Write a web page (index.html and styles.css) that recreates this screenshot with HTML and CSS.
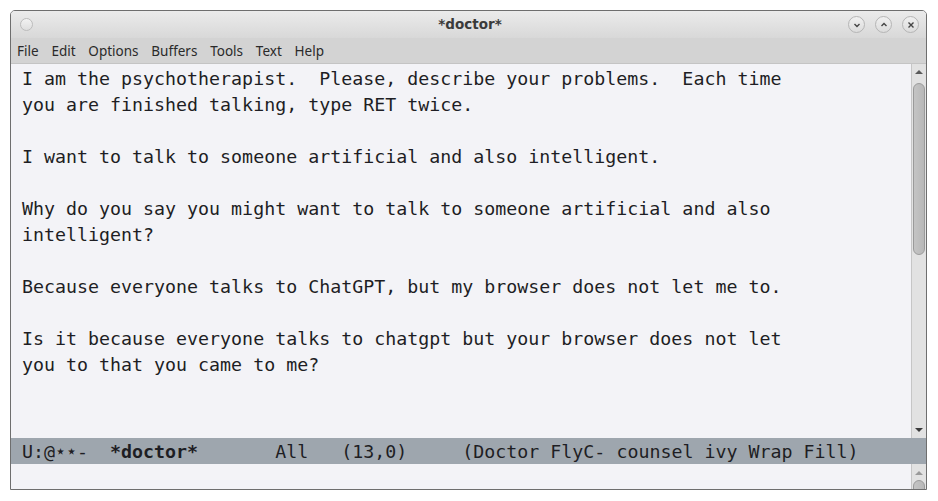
FILE: index.html
```html
<!DOCTYPE html>
<html>
<head>
<meta charset="utf-8">
<link rel="stylesheet" href="styles.css">
</head>
<body>
<div class="window">
  <div class="titlebar">
    <span class="dot"></span>
    <span class="title">*doctor*</span>
    <div class="controls">
      <span class="btn"><svg width="10" height="10" viewBox="0 0 10 10"><path d="M2.5 4 L5 6.5 L7.5 4" fill="none" stroke="#444" stroke-width="1.4"/></svg></span>
      <span class="btn"><svg width="10" height="10" viewBox="0 0 10 10"><path d="M2.5 6 L5 3.5 L7.5 6" fill="none" stroke="#444" stroke-width="1.4"/></svg></span>
      <span class="btn"><svg width="10" height="10" viewBox="0 0 10 10"><path d="M2.5 2.5 L7.5 7.5 M7.5 2.5 L2.5 7.5" fill="none" stroke="#444" stroke-width="1.4"/></svg></span>
    </div>
  </div>
  <div class="menubar">
    <span>File</span><span>Edit</span><span>Options</span><span>Buffers</span><span>Tools</span><span>Text</span><span>Help</span>
  </div>
  <div class="editor">
    <pre class="text">I am the psychotherapist.  Please, describe your problems.  Each time
you are finished talking, type RET twice.

I want to talk to someone artificial and also intelligent.

Why do you say you might want to talk to someone artificial and also
intelligent?

Because everyone talks to ChatGPT, but my browser does not let me to.

Is it because everyone talks to chatgpt but your browser does not let
you to that you came to me?</pre>
    <div class="scrollbar">
      <span class="arrow up"></span>
      <span class="thumb"></span>
      <span class="spacer"></span>
      <span class="arrow down"></span>
    </div>
  </div>
  <div class="modeline"><pre>U:@<span class="star">⋆⋆</span>-  <b>*doctor*</b>       All   (13,0)     (Doctor FlyC- counsel ivy Wrap Fill)</pre></div>
  <div class="minibuffer">
    <div class="mini-text"></div>
    <div class="scrollbar mini">
      <span class="arrow up"></span>
      <span class="thumb small"></span>
    </div>
  </div>
</div>
</body>
</html>
```
FILE: styles.css
```css
html, body {
  margin: 0;
  padding: 0;
  background: #ffffff;
}
.window {
  margin: 10px 0 0 10px;
  width: 915px;
  height: 478px;
  border: 1px solid #6e6e6e;
  border-radius: 5px 5px 0 0;
  display: flex;
  flex-direction: column;
  overflow: hidden;
  background: #f3f3f7;
}
.titlebar {
  height: 27px;
  flex: none;
  display: flex;
  align-items: center;
  position: relative;
  background: linear-gradient(#ebebeb, #d8d8d8);
}
.dot {
  width: 11px;
  height: 11px;
  border-radius: 50%;
  border: 1px solid #bcbcbc;
  background: linear-gradient(#f2f2f2, #dedede);
  margin-left: 9px;
}
.title {
  position: absolute;
  left: 3px;
  right: 0;
  top: 5px;
  text-align: center;
  font: bold 13.5px "DejaVu Sans", sans-serif;
  color: #3a3a3a;
}
.controls {
  margin-left: auto;
  margin-right: 7px;
  display: flex;
  gap: 10px;
}
.btn {
  width: 15px;
  height: 15px;
  border-radius: 50%;
  border: 1px solid #b5b5b5;
  background: linear-gradient(#f0f0f0, #dcdcdc);
  display: flex;
  align-items: center;
  justify-content: center;
}
.menubar {
  height: 26px;
  flex: none;
  background: #d3d3d3;
  display: flex;
  align-items: center;
  padding-left: 6px;
  gap: 12.8px;
  font: 13.5px "Noto Sans", "DejaVu Sans", sans-serif;
  color: #2a2a2a;
  border-bottom: 1px solid #c4c4c4;
  box-sizing: border-box;
}
.editor {
  height: 374px;
  flex: none;
  display: flex;
  background: #f3f3f7;
  overflow: hidden;
}
.text {
  flex: 1;
  margin: 0;
  padding: 2px 0 0 11px;
  font: 18.3px/26px "DejaVu Sans Mono", monospace;
  color: #1e1e24;
  white-space: pre;
}
.scrollbar {
  width: 14px;
  flex: none;
  background: #e2e2e2;
  border-left: 1px solid #c6c6c6;
  display: flex;
  flex-direction: column;
  align-items: center;
}
.arrow {
  width: 0;
  height: 0;
  border-left: 4px solid transparent;
  border-right: 4px solid transparent;
  flex: none;
}
.arrow.up {
  border-bottom: 4px solid #5a5a5a;
  margin-top: 6px;
  margin-bottom: 9px;
}
.arrow.down {
  border-top: 4px solid #3a3a3a;
  margin-bottom: 6px;
}
.thumb {
  width: 12px;
  height: 172px;
  flex: none;
  border: 1px solid #9a9a9a;
  border-radius: 7px;
  box-sizing: border-box;
  background: linear-gradient(90deg, #c4c4c4, #b8b8b8);
}
.spacer {
  flex: 1;
}
.modeline {
  height: 26px;
  flex: none;
  background: #9ea6ae;
  display: flex;
  align-items: center;
}
.modeline pre {
  margin: 0;
  padding: 1px 0 0 11px;
  font: 18.3px/26px "DejaVu Sans Mono", monospace;
  color: #1e1e24;
}
.star {
  font-weight: bold;
}
.minibuffer {
  flex: 1;
  display: flex;
  min-height: 0;
}
.mini-text {
  flex: 1;
}
.scrollbar.mini .arrow.up {
  margin-top: 7px;
  margin-bottom: 5px;
  border-bottom-color: #9a9a9a;
}
.thumb.small {
  height: 12px;
  border-radius: 7px 7px 0 0;
}
```
